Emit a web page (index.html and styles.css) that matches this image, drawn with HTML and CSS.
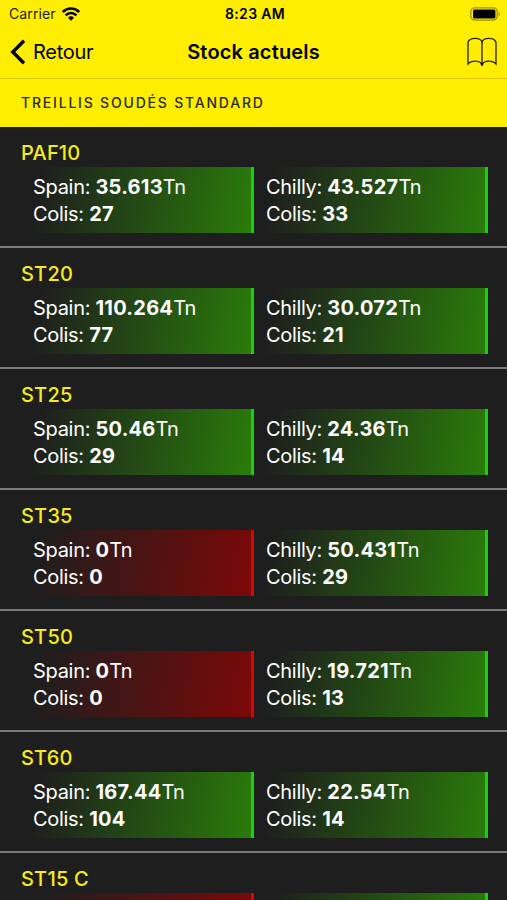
FILE: index.html
```html
<!DOCTYPE html>
<html lang="fr">
<head>
  <meta charset="UTF-8" />
  <meta name="viewport" content="width=device-width, initial-scale=1.0" />
  <title>Stock actuels</title>
  <link rel="stylesheet" href="styles.css">
</head>
<body>

<header class="top">
  <div class="status">
    <div class="carrier">
      <span>Carrier</span>
      <svg width="18" height="14" viewBox="0 0 18 14" fill="none" stroke="#000" stroke-width="2.5">
        <path d="M0.8 5 A11.6 11.6 0 0 1 17.2 5" />
        <path d="M3.6 8.3 A7.6 7.6 0 0 1 14.4 8.3" />
        <path d="M6 10.8 A4.3 4.3 0 0 1 12 10.8 L9 13.8 Z" fill="#000" stroke="none" />
      </svg>
    </div>
    <span class="time">8:23 AM</span>
    <svg class="battery" width="31" height="14" viewBox="0 0 31 14">
      <rect x="0.8" y="0.8" width="26.4" height="12.4" rx="4" fill="none" stroke="#000" stroke-opacity="0.4" stroke-width="1.2" />
      <rect x="3" y="2.5" width="22.4" height="9" rx="1.6" />
      <path d="M28.6 4.8 Q30.6 7 28.6 9.2 Z" fill-opacity="0.5" />
    </svg>
  </div>
  <nav class="nav">
    <a class="back">
      <svg width="16" height="26" viewBox="0 0 16 26" fill="none" stroke="#000" stroke-width="3.4">
        <path d="M14 1.8 L2.8 13 L14 24.2" />
      </svg>
      <span>Retour</span>
    </a>
    <h1>Stock actuels</h1>
    <svg class="book" width="30" height="30" viewBox="0 0 30 30" fill="none" stroke="#000" stroke-opacity="0.85" stroke-width="1.3">
      <path d="M15 4.8 C13.4 0.4 3 0 1 5.2 V27 C4 23.4 12.4 23 15 27.4 C17.6 23 26 23.4 29 27 V5.2 C27 0 16.6 0.4 15 4.8 Z" />
      <path d="M15 4.8 V27.4" />
      <path d="M13.2 26.4 H16.8 L15 29.4 Z" fill="#000" stroke="none" />
    </svg>
  </nav>
</header>

<h2 class="section">TREILLIS SOUDÉS STANDARD</h2>

<ul class="stock">
  <li>
    <h3>PAF10</h3>
    <div class="depots">
      <div class="depot ok"><p>Spain: <b>35.613</b>Tn</p><p>Colis: <b>27</b></p></div>
      <div class="depot ok"><p>Chilly: <b>43.527</b>Tn</p><p>Colis: <b>33</b></p></div>
    </div>
  </li>
  <li>
    <h3>ST20</h3>
    <div class="depots">
      <div class="depot ok"><p>Spain: <b>110.264</b>Tn</p><p>Colis: <b>77</b></p></div>
      <div class="depot ok"><p>Chilly: <b>30.072</b>Tn</p><p>Colis: <b>21</b></p></div>
    </div>
  </li>
  <li>
    <h3>ST25</h3>
    <div class="depots">
      <div class="depot ok"><p>Spain: <b>50.46</b>Tn</p><p>Colis: <b>29</b></p></div>
      <div class="depot ok"><p>Chilly: <b>24.36</b>Tn</p><p>Colis: <b>14</b></p></div>
    </div>
  </li>
  <li>
    <h3>ST35</h3>
    <div class="depots">
      <div class="depot empty"><p>Spain: <b>0</b>Tn</p><p>Colis: <b>0</b></p></div>
      <div class="depot ok"><p>Chilly: <b>50.431</b>Tn</p><p>Colis: <b>29</b></p></div>
    </div>
  </li>
  <li>
    <h3>ST50</h3>
    <div class="depots">
      <div class="depot empty"><p>Spain: <b>0</b>Tn</p><p>Colis: <b>0</b></p></div>
      <div class="depot ok"><p>Chilly: <b>19.721</b>Tn</p><p>Colis: <b>13</b></p></div>
    </div>
  </li>
  <li>
    <h3>ST60</h3>
    <div class="depots">
      <div class="depot ok"><p>Spain: <b>167.44</b>Tn</p><p>Colis: <b>104</b></p></div>
      <div class="depot ok"><p>Chilly: <b>22.54</b>Tn</p><p>Colis: <b>14</b></p></div>
    </div>
  </li>
  <li class="last">
    <h3>ST15 C</h3>
    <div class="depots">
      <div class="depot empty"></div>
      <div class="depot ok"></div>
    </div>
  </li>
</ul>

</body>
</html>
```

FILE: styles.css
```css
* {
  box-sizing: border-box;
}

body {
  margin: 0;
  height: 900px;
  overflow: hidden;
  background: #1e1e1e;
  color: #fff;
  font-family: Inter, 'Liberation Sans', sans-serif;
}

h1, h2, h3, p, ul {
  margin: 0;
  padding: 0;
}

.top {
  height: 79px;
  background: #ffee00;
  color: #000;
  border-bottom: 1px solid #d9cb0c;
}

.status {
  display: grid;
  grid-template-columns: 1fr auto 1fr;
  align-items: center;
  height: 27px;
  padding: 0 6px 0 9px;
  font-size: 14px;
}

.carrier {
  display: flex;
  align-items: center;
  gap: 6px;
  color: #1c1a00;
  letter-spacing: 0.1px;
}

.time {
  font-weight: 600;
  font-size: 14px;
  letter-spacing: 0.3px;
}

.battery {
  justify-self: end;
}

.nav {
  display: grid;
  grid-template-columns: 1fr auto 1fr;
  align-items: center;
  height: 50px;
  padding: 0 10px;
}

.back {
  display: flex;
  align-items: center;
  gap: 7px;
  font-size: 20px;
  letter-spacing: -0.3px;
}

.nav h1 {
  font-size: 20px;
  font-weight: 600;
  letter-spacing: 0.15px;
}

.book {
  justify-self: end;
}

.section {
  height: 48px;
  padding-left: 21px;
  background: #ffee00;
  color: #2b2a10;
  font-size: 14px;
  font-weight: 500;
  letter-spacing: 1.8px;
  line-height: 48px;
}

.stock {
  list-style: none;
}

.stock li {
  height: 121px;
  padding: 13px 19px 0 21px;
  border-bottom: 2px solid #7b7b7b;
}

.stock .last {
  height: 48px;
  overflow: hidden;
  border-bottom: none;
}

.stock h3 {
  height: 27px;
  color: #f5ea1a;
  font-size: 20px;
  font-weight: 500;
  letter-spacing: 0.2px;
  line-height: 27px;
}

.depots {
  display: grid;
  grid-template-columns: 233px 234px;
}

.depot {
  height: 66px;
  padding: 7px 0 0 12px;
  font-size: 20px;
  line-height: 27px;
  letter-spacing: -0.3px;
  white-space: nowrap;
}

.depot b {
  font-weight: 700;
  letter-spacing: 0.25px;
}

.ok {
  background: linear-gradient(100deg, #1e1e1e 8%, #2a7c0a 100%);
  border-right: 3px solid #14d20e;
}

.empty {
  background: linear-gradient(100deg, #1e1e1e 8%, #7c0808 100%);
  border-right: 3px solid #d60606;
}
```
